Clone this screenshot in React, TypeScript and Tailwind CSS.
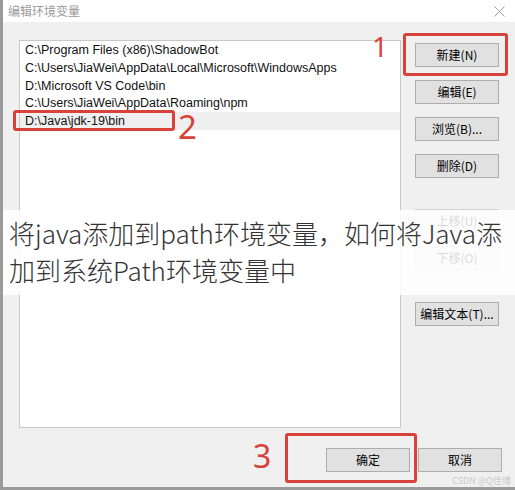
import React from "react";

const paths = [
  "C:\\Program Files (x86)\\ShadowBot",
  "C:\\Users\\JiaWei\\AppData\\Local\\Microsoft\\WindowsApps",
  "D:\\Microsoft VS Code\\bin",
  "C:\\Users\\JiaWei\\AppData\\Roaming\\npm",
  "D:\\Java\\jdk-19\\bin",
];

function Btn({ label, className = "" }: { label: string; className?: string }) {
  return (
    <div
      className={`w-[84px] h-[24px] flex items-center justify-center bg-[#e1e1e1] border border-[#adadad] text-[12px] text-black ${className}`}
    >
      {label}
    </div>
  );
}

export default function App() {
  return (
    <div
      className="relative w-[515px] h-[490px] overflow-hidden bg-[#f0f0f0] border-l-[3px] border-b-[3px] border-[#9a9a9a] flex flex-col"
      style={{ fontFamily: '"Liberation Sans", "Noto Sans CJK SC", sans-serif' }}
    >
      {/* title bar */}
      <div className="h-[22px] bg-white flex items-center justify-between pl-[5px] pr-[10px] shrink-0">
        <span className="text-[12px] text-[#9a9a9a]" style={{ fontFamily: '"Noto Sans CJK SC", sans-serif' }}>
          编辑环境变量
        </span>
        <svg width="11" height="11" viewBox="0 0 11 11" className="text-[#a0a0a0]">
          <path d="M0.5 0.5L10.5 10.5M10.5 0.5L0.5 10.5" stroke="currentColor" strokeWidth="1" />
        </svg>
      </div>

      {/* body */}
      <div className="flex pt-[18px] pl-[16px]">
        <div className="w-[382px] h-[388px] bg-white border border-[#c8c8c8] pt-[1px]">
          {paths.map((p, i) => (
            <div
              key={p}
              className={`h-[17.6px] flex items-center pl-[5px] text-[12.5px] text-[#111] ${i === 4 ? "bg-[#efefef]" : ""}`}
            >
              {p}
            </div>
          ))}
        </div>
        <div className="flex flex-col pl-[14px] pt-[3px]" style={{ fontFamily: '"Noto Sans CJK SC", sans-serif' }}>
          <Btn label="新建(N)" />
          <Btn label="编辑(E)" className="mt-[13px]" />
          <Btn label="浏览(B)..." className="mt-[13px]" />
          <Btn label="删除(D)" className="mt-[13px]" />
          <Btn label="上移(U)" className="mt-[31px] text-[#a8a8a8] bg-[#eaeaea] border-[#d2d2d2]" />
          <Btn label="下移(O)" className="mt-[13px] text-[#a8a8a8] bg-[#eaeaea] border-[#d2d2d2]" />
          <Btn label="编辑文本(T)..." className="mt-[32px]" />
        </div>
      </div>

      {/* footer */}
      <div className="flex justify-end gap-[8px] pr-[13px] mt-[20px]" style={{ fontFamily: '"Noto Sans CJK SC", sans-serif' }}>
        <Btn label="确定" />
        <Btn label="取消" />
      </div>

      {/* annotations */}
      <div className="absolute left-[400px] top-[33px] w-[105px] h-[43px] border-[3px] border-[#d8423a] rounded-[3px]" />
      <div className="absolute left-[369px] top-[32px] text-[28px] leading-none text-[#d8423a]" style={{ fontFamily: '"Noto Sans", sans-serif' }}>
        1
      </div>
      <div className="absolute left-[10px] top-[110px] w-[162px] h-[21px] border-[3px] border-[#d8423a] rounded-[3px]" />
      <div className="absolute left-[175px] top-[110px] text-[33px] leading-none text-[#d8423a]" style={{ fontFamily: '"Noto Sans", sans-serif' }}>
        2
      </div>
      <div className="absolute left-[282px] top-[433px] w-[132px] h-[50px] border-[3px] border-[#d8423a] rounded-[3px]" />
      <div className="absolute left-[250px] top-[440px] text-[32px] leading-none text-[#d8423a]" style={{ fontFamily: '"Noto Sans", sans-serif' }}>
        3
      </div>

      {/* overlay caption */}
      <div
        className="absolute left-0 top-[210px] w-[515px] h-[85px] bg-white/85 pl-[6px] pt-[4px] text-[26px] leading-[37px] text-[#333]"
        style={{ fontFamily: '"Noto Sans CJK SC", sans-serif', fontWeight: 300 }}
      >
        将java添加到path环境变量，如何将Java添
        <br />
        加到系统Path环境变量中
      </div>

      <div className="absolute right-[4px] bottom-[0px] text-[9px] text-[#c8c8c8]" style={{ fontFamily: '"Noto Sans CJK SC", sans-serif' }}>
        CSDN @Q佳博
      </div>
    </div>
  );
}
